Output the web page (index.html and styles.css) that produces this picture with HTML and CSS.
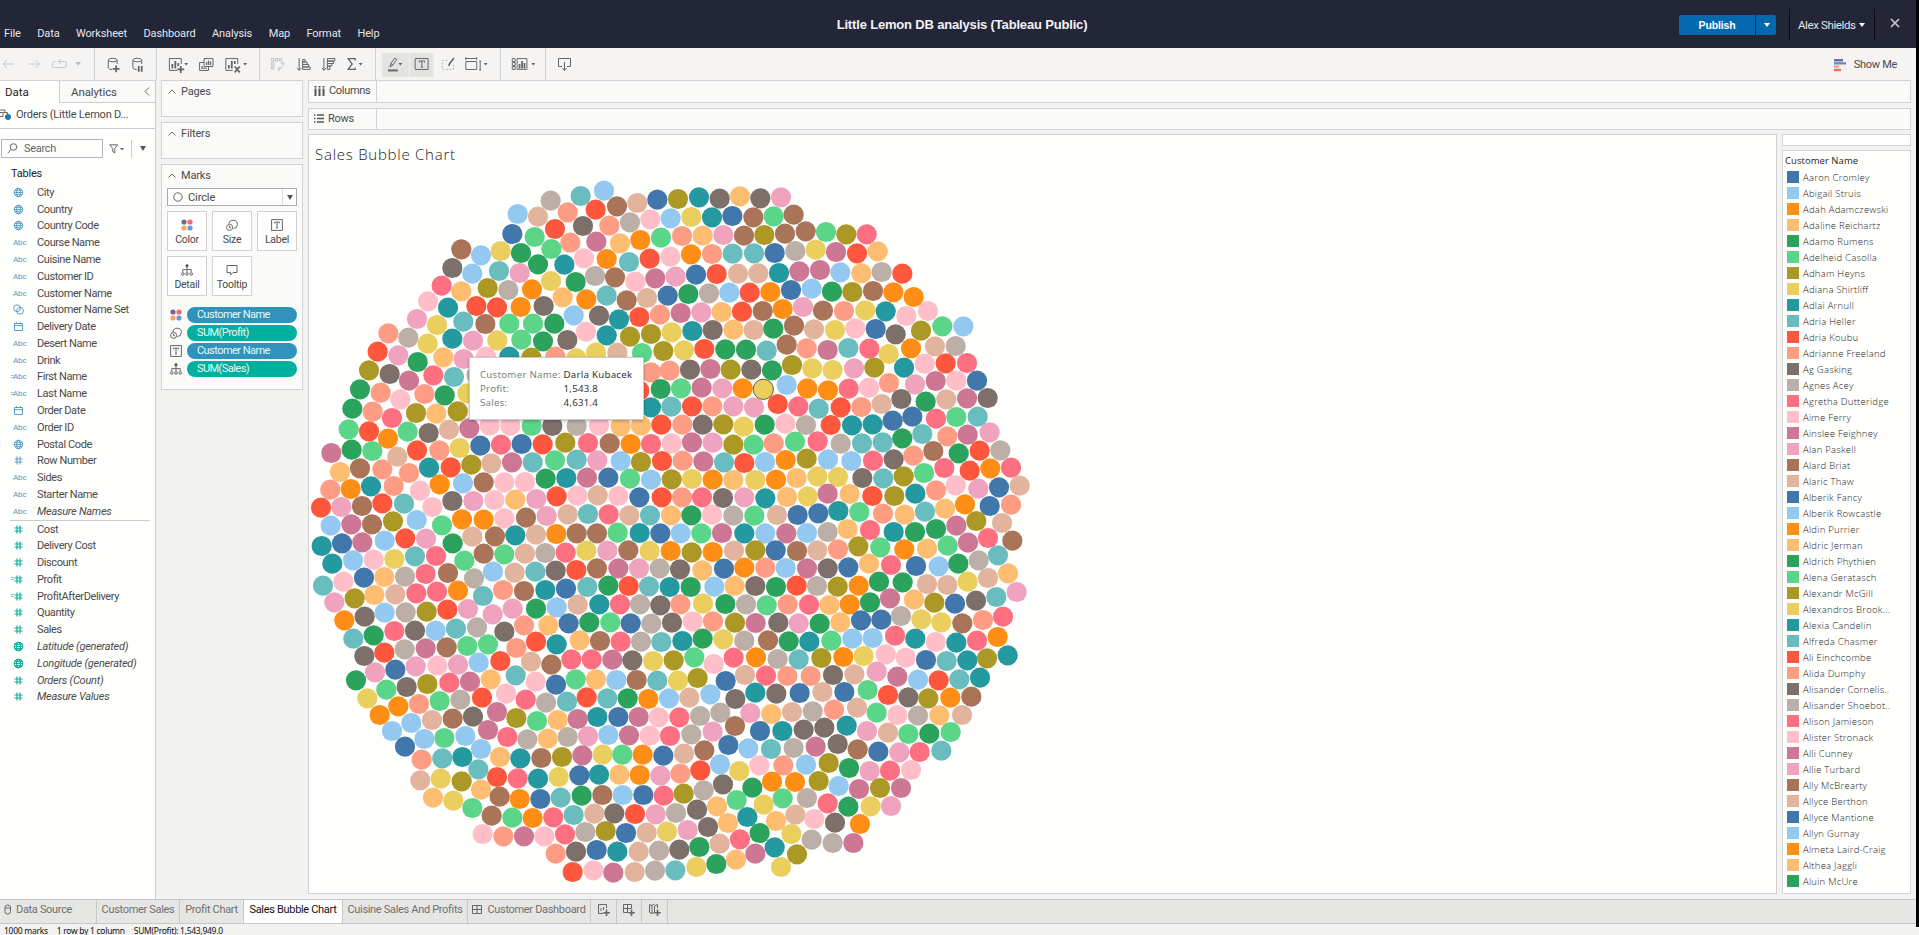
FILE: index.html
```html
<!DOCTYPE html>
<html lang="en">
<head>
<meta charset="utf-8">
<title>Little Lemon DB analysis (Tableau Public)</title>
<link rel="stylesheet" href="styles.css">
</head>
<body>
<svg class="sprite" aria-hidden="true">
  <symbol id="i-globe" viewBox="0 0 11 11"><circle cx="5.5" cy="5.5" r="4.2"/><ellipse cx="5.5" cy="5.5" rx="1.9" ry="4.2"/><path d="M1.3 5.5h8.4M2 3.3h7M2 7.7h7"/></symbol>
  <symbol id="i-num" viewBox="0 0 11 11"><path d="M4 1.5v8M7 1.5v8M1.5 4h8M1.5 7h8"/></symbol>
  <symbol id="i-date" viewBox="0 0 11 11"><path d="M1.5 2.5h8v7h-8zM1.5 4.7h8M3.5 1.2v1.3M7.5 1.2v1.3"/></symbol>
  <symbol id="i-set" viewBox="0 0 11 11"><circle cx="4" cy="4.2" r="3.4"/><circle cx="7" cy="6.8" r="3.4"/></symbol>
  <symbol id="m-color" viewBox="0 0 12 12"><g stroke="none"><circle cx="3" cy="3" r="2.6" fill="#7b6688"/><circle cx="9" cy="3" r="2.6" fill="#ec6a6a"/><circle cx="3" cy="9" r="2.6" fill="#f3a56c"/><circle cx="9" cy="9" r="2.6" fill="#6a9bd0"/></g></symbol>
  <symbol id="m-size" viewBox="0 0 12 12"><path d="M3 5a4.200 4.200 0 1 1 4.300 4.600"/><circle cx="3.600" cy="8.400" r="3"/><path d="M3.500 6.800v1.900h1.400"/></symbol>
  <symbol id="m-label" viewBox="0 0 12 12"><path d="M.6.6h10.8v10.8H.6zM3.5 4.3V3.2h5v1.1M6 3.2v5.6M5 8.8h2"/></symbol>
  <symbol id="m-detail" viewBox="0 0 12 12"><circle cx="6" cy="1.8" r="1.2" fill="#555"/><path d="M6 2v6M1.800 8V5.600h8.400V8"/><circle cx="1.800" cy="9.900" r="1.300"/><circle cx="6" cy="9.900" r="1.300"/><circle cx="10.200" cy="9.900" r="1.300"/></symbol>
  <symbol id="m-tip" viewBox="0 0 12 12"><path d="M1 1.5h10v7H7L4.5 11V8.5H1z"/></symbol>
</svg>

<div class="app">
  <header class="header">
    <nav class="menu"><span>File</span><span>Data</span><span>Worksheet</span><span>Dashboard</span><span>Analysis</span><span>Map</span><span>Format</span><span>Help</span></nav>
    <h1 class="book">Little Lemon DB analysis (Tableau Public)</h1>
    <div class="account">
      <button class="publish"><span>Publish</span><i class="caret"></i></button>
      <div class="user">Alex Shields<i class="caret"></i></div>
      <svg class="close" width="10" height="10" viewBox="0 0 10 10"><path d="M1 1l8 8M9 1l-8 8"/></svg>
    </div>
  </header>

  <div class="toolbar">
    <svg width="95" height="32" viewBox="0 0 95 32"><g stroke="#c6c6c6"><path d="M3 16h11M7 12l-4 4 4 4M29 16h11M36 12l4 4-4 4"/><path d="M56 13.500h-1.500q-1.500 0-1.500 1.500v3q0 1.500 1.500 1.500h11q1.500 0 1.500-1.500v-3q0-1.500-1.500-1.500H59M61.500 11l-2.500 2.500 2.500 2.500"/></g><path fill="#bbb" stroke="none" d="M76 14h6l-3 3.500z"/></svg>
    <svg width="62" height="32" viewBox="95 0 62 32"><ellipse cx="113" cy="12" rx="4.500" ry="1.800"/><path d="M108.500 12v8q1 1.700 4 1.700M117.500 12v4"/><path stroke-width="1.800" d="M116.500 17.500v7M113 21h7"/><ellipse cx="138" cy="12" rx="4.500" ry="1.800"/><path d="M133.500 12v8q1 1.700 4 1.700M142.500 12v4"/><path stroke-width="1.800" d="M139.500 18v6M142.500 18v6"/></svg>
    <svg width="103" height="32" viewBox="157 0 103 32"><path d="M181.500 16v-5.500h-12v12h8"/><path stroke-width="1.800" d="M172.500 16v4.500M175.500 13v7.500M178.500 15v3M181 18v7M177.500 21.500h7"/><path class="tri" d="M184.500 15h4l-2 2.500z"/><path d="M204.500 10.500h9v8h-9z M209 18.500v4h-9v-8h4.500"/><path stroke-width="1.300" d="M207 14v3M209 12.500v4.500M211 13.500v3.500M202.500 18v3M204.500 19.500V21M206.500 19.500V21"/><path d="M238.500 16v-5.500h-12v12h7"/><path stroke-width="1.800" d="M229.500 17v3.500M232.500 13v7.500M235.500 13v3M235.500 18.500l5 6M240.500 18.500l-5 6"/><path class="tri" d="M244 15h4l-2 2.500z"/></svg>
    <svg width="116" height="32" viewBox="260 0 116 32"><g stroke="#c0c0c0"><path d="M271.500 10.500h2.500v2.500h-2.500zM275.500 10.500h2.500v2.500h-2.500zM279.500 10.500h2.500v2.500h-2.500zM271.500 14.500h2.500v2.500h-2.500zM271.500 18.500h2.500v2.500h-2.500zM283 15c1 4-2 6-5 6M281 16l2-2 2 2M280 19l-2 2 2 2"/></g><path d="M299.500 10v12M297.500 20l2 2.500 2-2.500M303 11.500h2.500v2.500H303zM303 14h4.500v2.500H303zM303 16.500h6v2.500h-6zM303 19h7.500v2.500H303z"/><path d="M324.500 10v12M322.500 20l2 2.500 2-2.500M328 10.500h7.500v2.500H328zM328 13h6v2.500h-6zM328 15.500h4.500v2.500H328zM328 18h2.500v3.500H328z"/><path stroke-width="1.300" d="M356 12.500v-2h-7l4 5.500-4 5.500h7v-2"/><path class="tri" d="M359.500 15h4l-2 2.500z"/></svg>
    <svg width="125" height="32" viewBox="376 0 125 32"><path fill="#e3e3e2" stroke="none" d="M382 5h27v24h-27zM410 5h24v24h-24z"/><path stroke-width="2" d="M388 22.500h10"/><path d="M390 19l1-3.500 4-5.500 2 1.500-4 5.500zM391 15.500l2 1.500"/><path class="tri" d="M398.500 15h4l-2 2.500z"/><path d="M415.500 10.500h13v11h-13zM419.500 14.500v-1.500h5.500v1.500M422.200 13v6M421 19.200h2.500"/><path stroke="#bbb" stroke-dasharray="2 1.500" d="M448 12.500h-5v9h11v-5"/><path stroke-width="1.700" d="M454.500 10l-4.500 6-.5 2"/><path d="M466.500 10.500h11M466.500 9v3M477.500 9v3M466.500 13.500h11v8h-11zM481 13v9M480 13h2M480 22h2"/><path class="tri" d="M484.500 15h4l-2 2.500z"/></svg>
    <svg width="45" height="32" viewBox="501 0 45 32"><path d="M512.500 10.500h3v3h-3zM512.500 14.500h3v3h-3zM512.500 18.500h3v3h-3zM517.500 10.500h10v11h-10z"/><path stroke-width="1.800" d="M520 16v4.500M522.500 13v7.500M525 15v5.500"/><path class="tri" d="M532 15h4l-2 2.500z"/></svg>
    <svg class="last" width="40" height="32" viewBox="546 0 40 32"><path d="M562 18.500h-3.500v-8h12v8H567M564.500 14v8M562.500 20l2 2.500 2-2.500"/></svg>
    <div class="showme"><svg width="13" height="14" viewBox="0 0 13 14"><g stroke="none"><path fill="#7a6b9c" d="M0 1h9v2.500H0z"/><path fill="#5f8cc7" d="M0 4.200h12v2.300H0z"/><path fill="#f0a08a" d="M0 7.500h5v2.300H0z"/><path fill="#ea6d6d" d="M0 10.800h7v2.400H0z"/></g></svg>Show Me</div>
  </div>

  <main class="body">
    <aside class="data">
      <div class="dtabs"><div class="dtab on">Data</div><div class="dtab off">Analytics<svg width="6" height="9" viewBox="0 0 6 9"><path d="M5 .5l-4 4 4 4"/></svg></div></div>
      <div class="source"><svg width="12" height="13" viewBox="0 0 12 13"><path d="M0 2h5v3M0 4.500h3v4H0M3.500 4.500h4v4"/><circle cx="8" cy="9" r="3" fill="#1f77b4" stroke="none"/></svg>Orders (Little Lemon D...</div>
      <div class="find">
        <div class="search"><svg width="11" height="11" viewBox="0 0 11 11"><circle cx="6.500" cy="4" r="3.300"/><path d="M4 6.500L.8 10.200"/></svg>Search</div>
        <svg width="16" height="10" viewBox="0 0 16 10"><path d="M.7.8h8L5.800 4.500V9L3.700 7.500v-3z"/><path class="tri" d="M11 4h4l-2 2.500z"/></svg>
        <i class="bar"></i><i class="caret"></i>
      </div>
      <div class="tables">Tables</div>
      <ul class="fields" id="dims"></ul>
      <ul class="fields measures" id="meas"></ul>
    </aside>

    <section class="cards">
      <div class="card short"><div class="chead"><svg width="8" height="5" viewBox="0 0 8 5"><path d="M.5 4.500L4 1l3.500 3.500"/></svg>Pages</div></div>
      <div class="card short"><div class="chead"><svg width="8" height="5" viewBox="0 0 8 5"><path d="M.5 4.500L4 1l3.500 3.500"/></svg>Filters</div></div>
      <div class="card marks">
        <div class="chead"><svg width="8" height="5" viewBox="0 0 8 5"><path d="M.5 4.500L4 1l3.500 3.500"/></svg>Marks</div>
        <div class="select"><svg width="10" height="10" viewBox="0 0 10 10"><circle cx="5" cy="5" r="4.200"/></svg><span>Circle</span><b><i class="caret"></i></b></div>
        <div class="btns">
          <div><svg width="12" height="12"><use href="#m-color"/></svg>Color</div>
          <div><svg width="12" height="12"><use href="#m-size"/></svg>Size</div>
          <div><svg width="12" height="12"><use href="#m-label"/></svg>Label</div>
          <div><svg width="12" height="12"><use href="#m-detail"/></svg>Detail</div>
          <div><svg width="12" height="12"><use href="#m-tip"/></svg>Tooltip</div>
        </div>
        <div class="pills">
          <div><svg width="12" height="12"><use href="#m-color"/></svg><span class="blue">Customer Name</span></div>
          <div><svg width="12" height="12"><use href="#m-size"/></svg><span>SUM(Profit)</span></div>
          <div><svg width="12" height="12"><use href="#m-label"/></svg><span class="blue">Customer Name</span></div>
          <div><svg width="12" height="12"><use href="#m-detail"/></svg><span>SUM(Sales)</span></div>
        </div>
      </div>
    </section>

    <section class="work">
      <div class="shelf cols"><div><svg width="11" height="10" viewBox="0 0 11 10"><path stroke-width="2" d="M1.500 0v1.500M5.500 0v1.500M9.500 0v1.500M1.500 2.500V10M5.500 2.500V10M9.500 2.500V10"/></svg>Columns</div></div>
      <div class="shelf rows"><div><svg width="10" height="9" viewBox="0 0 10 9"><path stroke-width="1.500" d="M0 1h1.500M3 1h7M0 4.500h1.500M3 4.500h7M0 8h1.500M3 8h7"/></svg>Rows</div></div>
      <div class="stage">
        <div class="sheet">
          <h2>Sales Bubble Chart</h2>
          <svg id="chart" width="1467" height="720" viewBox="309 172 1467 720"></svg>
          <div class="tooltip"><span>Customer Name:</span><b>Darla Kubacek</b><span>Profit:</span><b>1,543.8</b><span>Sales:</span><b>4,631.4</b></div>
        </div>
        <div class="side">
          <div class="blank"></div>
          <div class="legend"><h3>Customer Name</h3><ul id="legend"></ul></div>
        </div>
      </div>
    </section>
  </main>

  <footer>
    <div class="tabs">
      <div class="t1"><svg width="8" height="11" viewBox="0 0 8 11"><rect x="1" y="1" width="5.500" height="9" rx="2.500"/><path d="M1 4h5.500"/></svg>Data Source</div>
      <div class="t2">Customer Sales</div>
      <div class="t3">Profit Chart</div>
      <div class="t4 on">Sales Bubble Chart</div>
      <div class="t5">Cuisine Sales And Profits</div>
      <div class="t6"><svg width="10" height="9" viewBox="0 0 10 9"><path d="M.5.5h9v8h-9zM5 .5v8M.5 4.500h9"/></svg>Customer Dashboard</div>
      <div class="t7"><svg width="13" height="13" viewBox="0 0 13 13"><path d="M9.500 5V1.500h-8v9H6M4 5v3M6.500 4v3"/><path stroke-width="1.600" d="M9.500 6.500V13M6.300 9.800h6.500"/></svg></div>
      <div class="t7"><svg width="13" height="13" viewBox="0 0 13 13"><path d="M9.500 5V1.500h-8v8H6M5.500 1.500v8M1.500 5.500h8"/><path stroke-width="1.600" d="M9.500 6.500V13M6.300 9.800h6.500"/></svg></div>
      <div class="t7"><svg width="13" height="13" viewBox="0 0 13 13"><path d="M9.500 5V1.500L6.500 3v7M1.500 1.500L4 2.500 6.500 1M1.500 1.500v8l2.500 1 2.500-1M4 2.500v8"/><path stroke-width="1.600" d="M9.500 6.500V13M6.300 9.800h6.500"/></svg></div>
    </div>
    <div class="status"><span>1000 marks</span><span>1 row by 1 column</span><span>SUM(Profit): 1,543,949.0</span></div>
  </footer>
</div>
<div class="edge"></div>
<script src="script.js"></script>
</body>
</html>
```
FILE: styles.css
```css
* { box-sizing: border-box; }
body { margin: 0; width: 1919px; height: 935px; overflow: hidden; display: flex; background: #f2f2f1; font-family: Roboto, "Liberation Sans", sans-serif; font-size: 11px; color: #4a4a4a; }
h1, h2, h3, ul { margin: 0; padding: 0; font-weight: 400; list-style: none; }
svg { display: block; flex: none; fill: none; stroke: #666; }
.sprite { position: absolute; width: 0; height: 0; }
.tri { fill: #666; stroke: none; }
.caret { width: 0; height: 0; border: 4px solid transparent; border-top: 5px solid #555; border-bottom: 0; flex: none; }
.app { width: 1916px; display: flex; flex-direction: column; }
.edge { width: 3px; height: 927px; background: #000; }

.header { height: 48px; background: #232637; display: grid; grid-template-columns: 600px 1fr 600px; color: #e4e4e8; }
.menu { display: flex; align-items: center; gap: 16.500px; padding: 17px 0 0 4px; font-size: 11px; letter-spacing: -.13px; }
.book { font-size: 13px; font-weight: 700; line-height: 49px; text-align: center; color: #f2f2f5; padding-left: 8px; letter-spacing: -.17px; font-family: "Liberation Sans", sans-serif; }
.account { display: flex; justify-content: flex-end; align-items: center; padding-right: 16px; }
.publish { display: flex; align-items: center; height: 20px; width: 97px; padding: 0 7px 0 0; border: 0; border-radius: 2px; background: #0369ae; color: #fff; font: 700 10.500px "Liberation Sans", sans-serif; margin-right: 13px; }
.publish span { width: 77px; height: 20px; line-height: 20px; border-right: 1px solid #232637; margin-right: 8px; flex: none; letter-spacing: -.15px; }
.publish .caret, .user .caret { border-top-color: #fff; border-width: 4px 3px 0; }
.user { height: 32px; display: flex; align-items: center; gap: 3px; border: solid #0a0b12; border-width: 0 1px; padding: 0 11px 0 8px; width: 86px; font-size: 11.500px; letter-spacing: -.38px; margin-right: 15px; white-space: nowrap; }
.close { stroke: #ccc; stroke-width: 1.600; margin-top: -3px; }

.toolbar { height: 32px; display: flex; background: #f5f4f3; }
.toolbar > svg { border-right: 1px solid #d0d0d0; }
.toolbar > svg.last { border: 0; }
.showme { display: flex; align-items: center; gap: 7px; margin-left: auto; padding-right: 19px; font-size: 11px; letter-spacing: -.3px; padding-top: 1px; }

.body { height: 819px; display: flex; }
.data { width: 156px; background: #fffffe; border-right: 1px solid #ccc; }
.dtabs { height: 23px; display: flex; border-top: 1px solid #d4d4d4; font-size: 11.500px; }
.dtab { display: flex; align-items: center; padding-bottom: 1px; }
.dtab.on { width: 59px; padding-left: 5px; color: #222; }
.dtab.off { flex: 1; border-left: 1px solid #ccc; border-bottom: 1px solid #ccc; padding: 0 5px 0 11px; justify-content: space-between; letter-spacing: -.1px; background: #fafaf9; }
.source { height: 26px; display: flex; align-items: center; gap: 4px; border-bottom: 1px solid #ccc; font-size: 11px; letter-spacing: -.22px; padding-bottom: 2px; white-space: nowrap; }
.find { height: 38px; padding: 10px 9px 9px 1px; display: flex; align-items: center; gap: 6px; }
.search { width: 103px; height: 19px; border: 1px solid #b5b5b5; display: flex; align-items: center; gap: 6px; padding: 0 0 1px 5px; font-size: 11px; letter-spacing: -.3px; color: #666; }
.find .bar { width: 1px; height: 18px; background: #ccc; }
.find .caret { margin-left: 2px; border-width: 5px 3px 0; }
.tables { height: 17px; padding-left: 11px; line-height: 14px; font-size: 11px; color: #222; letter-spacing: -.2px; }
.fields li { height: 16.790px; display: flex; align-items: center; font-size: 11px; letter-spacing: -.4px; white-space: nowrap; }
.fields .ic { width: 27px; padding-left: 13px; flex: none; margin-right: 10px; color: #4a97bd; font-size: 8px; letter-spacing: -.1px; display: flex; position: relative; }
.fields .ic svg { stroke: #4a97bd; stroke-width: .9; }
.fields .calc::before { content: "="; position: absolute; left: 10px; }
.measures { border-top: 1px solid #ccc; margin: 0 5px 0 10px; }
.measures li { margin-left: -10px; }
.measures .ic { color: #00a99d; }
.measures .ic svg { stroke: #12b09f; stroke-width: 1.200; }
.fields .em { font-style: italic; letter-spacing: -.26px; }

.cards { width: 152px; padding: 0 5px; display: flex; flex-direction: column; gap: 5px; }
.card { border: 1px solid #d4d4d4; background: #fafaf9; }
.short { height: 37px; }
.marks { height: 226px; padding: 0 5px; }
.chead { display: flex; align-items: center; gap: 5px; height: 20px; padding-left: 6px; font-size: 11px; letter-spacing: -.15px; }
.marks .chead { padding-left: 1px; }
.select { height: 18px; margin-top: 3px; border: 1px solid #aaa; background: #fff; display: flex; align-items: center; gap: 5px; padding-left: 5px; font-size: 11px; letter-spacing: -.1px; }
.select span { flex: 1; }
.select b { height: 16px; width: 14px; border-left: 1px solid #ddd; display: flex; align-items: center; justify-content: center; }
.select .caret { border-width: 5px 3px 0; }
.btns { display: grid; grid-template-columns: repeat(3, 40px); gap: 5px; margin-top: 5px; }
.btns div { height: 40px; border: 1px solid #d0d0d0; background: #fff; display: flex; flex-direction: column; align-items: center; gap: 2px; padding-top: 7px; font-size: 10.500px; line-height: 14px; letter-spacing: -.25px; }
.pills { display: grid; gap: 2.300px; margin-top: 10.500px; }
.pills div { display: flex; align-items: center; gap: 5px; padding-left: 3px; }
.pills span { flex: 1; height: 16px; line-height: 16px; border-radius: 8px; background: #00b09f; color: #e6faf6; padding-left: 10px; font-size: 11px; letter-spacing: -.55px; }
.pills .blue { background: #2f93bd; }

.work { width: 1608px; padding-right: 5px; }
.shelf { height: 23px; background: #fafaf9; border: 1px solid #d4d4d4; }
.rows { height: 22px; margin: 5px 0 4px; }
.shelf div { width: 68px; height: 100%; border-right: 1px solid #d4d4d4; display: flex; align-items: center; gap: 4px; padding: 0 0 2px 5px; font-size: 11px; letter-spacing: -.3px; }
.shelf svg { stroke: #555; }
.stage { display: flex; gap: 5px; height: 760px; }
.sheet { width: 1469px; background: #fffffe; border: 1px solid #d0d0d0; position: relative; }
.sheet h2 { height: 37px; padding: 10px 0 0 6px; font: 300 15px/19px "Open Sans", sans-serif; color: #222; letter-spacing: .75px; }
.tooltip { position: absolute; left: 160px; top: 222px; width: 175px; height: 63px; background: #fff; border: 1px solid #ccc; box-shadow: 0 1px 3px rgba(0,0,0,.3); padding: 10px 10px 0; display: grid; grid-template-columns: 83.500px 1fr; grid-auto-rows: 14px; font: 400 9.700px/14px "Noto Sans", sans-serif; color: #808080; letter-spacing: .25px; white-space: nowrap; }
.tooltip b { color: #333; font-weight: 400; }
.side { width: 129px; display: flex; flex-direction: column; gap: 4px; }
.blank { height: 12px; background: #fff; border: 1px solid #d4d4d4; }
.legend { height: 744px; background: #fffffe; border: 1px solid #d4d4d4; padding: 2px 0 0 2px; font-family: "Open Sans", sans-serif; }
.legend h3 { font-size: 9.500px; line-height: 16px; color: #222; letter-spacing: .05px; }
.legend li { height: 16px; display: flex; align-items: center; gap: 4px; padding-left: 2px; font-size: 9.500px; font-weight: 300; color: #222; white-space: nowrap; letter-spacing: .25px; }
.legend i { width: 12px; height: 12px; }

footer { border-top: 1px solid #c4c4c4; }
.tabs { height: 24px; display: flex; background: #e6e6e4; border-bottom: 1px solid #c8c8c8; font-size: 11px; letter-spacing: -.32px; color: #707070; white-space: nowrap; }
.tabs div { border-right: 1px solid #c8c8c8; display: flex; align-items: center; justify-content: center; gap: 5px; padding-bottom: 4px; flex: none; }
.tabs .on { background: #fff; color: #111; }
.t1 { width: 97px; } .tabs .t1 { justify-content: flex-start; padding-left: 4px; gap: 4px; }
.t2 { width: 83px; } .t3 { width: 64px; } .t4 { width: 99px; } .t5 { width: 125px; } .t6 { width: 123px; } .t7 { width: 25.500px; }
.status { height: 11px; display: flex; gap: 9px; padding: 1px 0 0 4px; font: 8.500px/11px "Noto Sans", sans-serif; letter-spacing: -.28px; color: #111; }
```
FILE: script.js
```js
const NS = "http://www.w3.org/2000/svg";
const COLORS = {
  a: "#4277ab", b: "#93c9f0", c: "#ff8e16", d: "#ffbd71", e: "#2ba35d",
  f: "#5bd587", g: "#ac9824", h: "#eacf5f", i: "#24999f", j: "#6abdbf",
  k: "#ff573e", l: "#ff9d84", m: "#7d6f6a", n: "#bcafa8", o: "#ff6f82",
  p: "#ffbec8", q: "#cd7795", r: "#efa3bf", s: "#aa7458", t: "#e2b49e"
};

const dims = ["g City", "g Country", "g Country Code", "a Course Name", "a Cuisine Name", "a Customer ID",
  "a Customer Name", "s Customer Name Set", "d Delivery Date", "a Desert Name", "a Drink", "A First Name",
  "A Last Name", "d Order Date", "a Order ID", "g Postal Code", "n Row Number", "a Sides", "a Starter Name",
  "a *Measure Names"];
const meas = ["n Cost", "n Delivery Cost", "n Discount", "N Profit", "N ProfitAfterDelivery", "n Quantity",
  "n Sales", "g *Latitude (generated)", "g *Longitude (generated)", "n *Orders (Count)", "n *Measure Values"];
const ICONS = { g: "i-globe", n: "i-num", d: "i-date", s: "i-set" };

function fillFields(id, list) {
  document.getElementById(id).innerHTML = list.map(f => {
    const k = f[0], em = f[2] === "*", name = f.slice(em ? 3 : 2);
    const icon = ICONS[k.toLowerCase()];
    const body = icon ? `<svg width="11" height="11"><use href="#${icon}"/></svg>` : "Abc";
    return `<li><span class="ic${k < "a" ? " calc" : ""}">${body}</span><span${em ? ' class="em"' : ""}>${name}</span></li>`;
  }).join("");
}
fillFields("dims", dims);
fillFields("meas", meas);

const people = ["Aaron Cromley", "Abigail Struis", "Adah Adamczewski", "Adaline Reichartz", "Adamo Rumens",
  "Adelheid Casolla", "Adham Heyns", "Adiana Shirtliff", "Adlai Arnull", "Adria Heller", "Adria Koubu",
  "Adrianne Freeland", "Ag Gasking", "Agnes Acey", "Agretha Dutteridge", "Aime Ferry", "Ainslee Feighney",
  "Alan Paskell", "Alard Briat", "Alaric Thaw", "Alberik Fancy", "Alberik Rowcastle", "Aldin Purrier",
  "Aldric Jerman", "Aldrich Phythien", "Alena Geratasch", "Alexandr McGill", "Alexandros Brook...",
  "Alexia Candelin", "Alfreda Chasmer", "Ali Einchcombe", "Alida Dumphy", "Alisander Cornelis..",
  "Alisander Shoebot..", "Alison Jamieson", "Alister Stronack", "Alli Cunney", "Allie Turbard",
  "Ally McBrearty", "Allyce Berthon", "Allyce Mantione", "Allyn Gurnay", "Almeta Laird-Craig",
  "Althea Jaggli", "Aluin McUre"];
document.getElementById("legend").innerHTML = people.map((p, n) =>
  `<li><i style="background:${COLORS["abcdefghijklmnopqrst"[n % 20]]}"></i>${p}</li>`).join("");

// Bubbles by quadrant: colour key + centre in thirds of a pixel from the quadrant origin.
const quadrants = [
{ x: 300, y: 170, d: `n752,92 j842,78 b912,62 b653,132 t714,140 l803,127 k887,119 s951,109 t1012,99 a1072,89
k765,177 m849,168 l928,167 n990,157 p1051,148 b1112,145
a637,192 f704,201 l811,218 q889,215 d960,220 c1021,210 f1083,203 f754,237
s484,238 b543,256 h602,243 e663,249 e714,283 i793,284 p852,265 c920,267 j987,276 k1049,266 p1111,260
m457,294 b517,311 j597,303 r659,309 h753,333 e827,336 n885,318 s945,322 p1006,335 q1066,325
o425,347 d484,364 g563,354 n625,360 c696,358 m731,408 d788,382 c859,388 j920,377 s980,391 t1041,384 a1103,377
p384,394 i444,413 k529,408 k591,412 c662,411 b821,436 m897,437 i957,448 k1018,441 l1080,434
r351,447 h411,465 j490,455 s556,462 f628,461 f699,461 e763,461 p858,485 i920,496 g990,500 g1053,492 h1115,487
l265,490 n325,503 h383,521 i457,506 r519,512 h592,511 f664,509 e729,514 m802,510
k233,545 r295,556 e353,576 d430,562 r491,567 p558,560 i628,560 g694,563 l766,560 h829,565 h888,548 t952,548 f1026,549 g1090,543
g207,601 m269,612 q327,632 o400,616 j462,621 n530,615 l1053,607 l1109,602
e180,658 l242,668 p301,688 l373,672 e434,676 h502,670 k1018,662 e1082,657
e157,716 l218,725 o276,744 g348,729 d409,731 g473,724 i1053,712 j1114,710
f146,778 k207,784 c264,806 f323,785 m386,789 t447,779 q508,775 p569,767 p631,767 f695,768 m757,768 n830,768 p897,766 d962,769 d1023,767 k1084,764
q94,849 e155,839 f217,843 t292,860 k351,841 l418,841 h479,834 a541,827 o603,824 a665,822 k728,823 g796,818 o864,819 s929,820 c992,822 o1053,822 p1115,820
d120,906 s180,895 l247,898 l327,909 i387,893 k452,892 g514,884 t574,880 q636,877 j698,877 f765,871 j830,869 r892,871 b962,873 g1023,876 k1086,873
l91,959 c152,957 i213,949 l281,948 p360,962 c419,943 b489,940 s551,937 p613,937 p675,936 e737,926 i799,924 q861,923 a925,923 f990,926 b1053,929 g1115,928
k63,1013 r124,1011 s186,1008 k247,1000 j312,1001 p397,1011 m457,993 r520,993 p583,990 d646,989 r709,987 k770,979 p832,977 t893,976 p955,978 a1018,982 k1085,982
b92,1067 q154,1063 s216,1063 g279,1054 b350,1050 f426,1066 c486,1048 c551,1049 p613,1045 s678,1043 r740,1038 t803,1033 j864,1032 o926,1033 t988,1036 j1050,1036 d1113,1036` },
{ x: 670, y: 170, d: `g24,87 i87,82 m149,86 d210,79 m271,85 r333,82
h64,141 i126,142 a187,138 s250,142 f311,139 s371,134
l36,198 d98,197 r160,195 s222,197 g283,195 s345,191 s407,184 f468,186 g529,193 o590,193
c63,253 l126,252 j188,251 j252,250 a314,249 n376,243 h437,239 q498,246 k561,250 d623,244
r17,320 a78,314 k140,312 t204,311 t265,310 i327,309 q388,304 q450,300 b511,307 d574,310 n635,306 k697,311
e55,372 n117,370 b178,368 k239,368 c301,366 a363,360 b425,356 e486,365 g547,366 s609,363 c670,367 c731,381
q32,429 r94,427 d155,426 k216,425 s278,423 c338,417 r399,411 s459,422 l522,423 h586,421 i647,424 p709,438 p774,423
i67,483 m128,480 d190,479 t251,480 e310,476 s372,467 t432,478 h495,480 p556,475 a617,477 m677,493 g753,482 f817,469 b880,469
h42,541 k103,537 e166,538 e228,539 j290,542 s350,524 l410,535 q473,540 j535,534 o598,536 h656,552 c723,535 t795,529 n857,528
m60,599 q121,597 g182,599 m244,599 e306,601 g366,585 h427,595 h488,600 r552,595 g613,593 i702,593 p764,581 k827,580 o891,579
f33,655 q95,653 r157,655 c218,655 b350,645 c412,655 c474,661 o536,656 p597,653 l657,639 r735,643 q797,633 p859,632 a921,632
k66,709 l127,709 r190,709 r252,712 k323,702 o385,709 j446,716 k512,712 l574,711 t635,702 m694,687 e767,695 t829,688 q891,685 m953,684
l37,764 m98,764 g160,763 h221,770 e284,764 p346,761 n408,765 k482,765 i546,766 i608,763 a668,752 a727,740 o798,746 f859,741 j923,740
q66,817 r128,818 g190,824 f251,824 l311,820 f375,815 o443,814 n512,821 j576,820 j638,817 e697,805 j757,792 l832,799 q893,794 r959,787
l38,872 q100,874 j162,877 k223,879 b285,876 c347,870 g410,866 b474,868 b544,873 o609,872 m671,868 l730,857 s790,843 e866,850 k929,842 n991,841
h66,927 c128,929 d190,930 h256,930 c318,929 d380,924 h442,919 h504,921 m577,924 j640,925 g701,919 f762,909 o823,894 k899,902 c961,895 o1023,893
l36,982 o96,982 m159,984 r223,982 i286,985 d351,981 h413,979 q473,971 d539,972 k607,978 g673,978 i736,971 l798,961 p857,946 r925,956 a987,952 t1049,947
e64,1036 p126,1034 n190,1037 f253,1037 t321,1035 a383,1035 a445,1030 i505,1023 f568,1026 l639,1031 d704,1034 j765,1025 d825,1016 c885,1003 a959,1008 l1023,1004
g919,1053 t996,1059 q859,1067
b32,1090 f94,1090 q156,1089 i223,1090 b286,1090 q349,1090 b411,1089 n473,1086 d533,1077 o600,1080 i671,1086 e735,1086 e798,1077 H280,658` },
{ x: 300, y: 530, d: `i65,48 a126,40 q187,37 b254,32 k316,25 r378,26 e458,40 t517,20 s585,19 i646,16 t708,14 c769,12 s830,10 s891,10 f953,8 i1019,9 a1081,10
i97,101 b159,91 p221,89 h283,87 j345,79 o408,78 f493,92 s551,71 f613,73 t675,71 n736,69 o797,68 h859,62 r922,62 s985,61 h1049,63 c1112,63
j69,167 p130,155 a192,143 d253,141 n315,140 o377,132 s444,129 n522,145 b579,125 t644,128 j706,125 m767,122 k829,120 s891,115 q955,115 r1017,115 n1079,115
r103,217 g164,205 d223,195 t286,193 o349,190 o411,185 c474,182 j549,198 l609,180 s672,183 i736,180 a798,176 j862,171 e925,167 k986,168 j1047,169 i1109,171
c133,271 m194,260 b254,248 n317,247 g380,245 k442,239 r504,237 r578,253 r638,236 e708,236 b770,232 t833,224 i898,223 o960,223 n1020,223 m1081,226
j160,326 e221,316 o283,303 m345,302 b407,302 j468,296 n531,292 m613,305 l672,286 d745,286 a806,280 e868,277 f931,277 a992,280 n1054,281 m1116,278
m193,378 k253,368 n314,358 q377,355 s440,352 f502,348 f564,343 l649,354 k708,335 i770,343 d839,331 s900,333 o962,335 n1023,335 j1084,336
e168,451 r225,427 a286,419 r347,409 p412,407 r474,404 b536,398 k601,393 t693,395 s754,404 o814,388 o875,388 q937,389 m997,391 h1059,393 g1121,391
f259,479 m320,471 g382,462 o448,458 q510,455 d572,448 j647,436 p707,455 a768,464 f827,448 d888,448 b949,450 s1010,450 j1072,452
h202,505 c295,529 l357,522 f419,513 n481,509 k546,503 p618,491 o677,509 n738,518 j801,515 k860,502 j922,505 e983,505 c1045,507 b1107,505
c239,555 b334,579 t396,570 s458,566 m519,560 q591,546 g649,564 f711,573 d773,570 q833,567 i892,561 a955,561 q1016,561 p1076,562
b276,603 b373,627 f433,624 b496,618 q564,600 o622,621 n682,628 d743,626 n803,621 r864,619 b925,615 q987,616 p1049,617 o1110,618
a315,650 l365,689 j427,685 i487,681 b543,657 d600,681 i661,685 s724,684 g786,681 q847,676 h908,674 f967,674 c1028,674 a1090,677
t361,751 h422,746 g485,754 j535,718 k591,741 o653,745 i714,746 h776,741 a838,736 i897,734 d958,734 c1019,735 r1081,737
d399,803 h460,812 d543,779 s599,800 c659,807 a721,807 j782,803 e845,797 s907,795 b968,795 a1030,795 o1091,797
f517,834 s575,857 f637,863 c698,864 o760,862 j821,855 t883,851 m943,850 k1005,852 r1067,853
p548,912 l610,919 q672,919 p733,919 o795,913 n856,906 g917,903 a978,909 t1040,908 h1101,905
l767,971 m828,965 a890,960 i952,965 t1016,965 n1077,962
k818,1026 p880,1021 q940,1028 t1004,1026 n1065,1022` },
{ x: 670, y: 530, d: `q894,38 o954,24 s1027,32
g65,67 c128,66 t192,62 g256,61 a317,61 s381,63 t442,61 l504,58 g565,49 f631,52 c703,58 d771,56 f833,47 j984,76
m30,118 d97,121 a162,116 c223,113 l286,113 b347,114 q411,115 m473,115 a535,112 d597,101 o663,105 a738,108 b806,109 e865,101 n926,91 d1014,130
e62,171 b133,170 d194,168 m256,168 e318,171 k380,167 n441,168 g503,170 c566,167 e627,155 e698,157 t771,162 t832,165 h893,155 t954,144 r1040,186
l31,223 h99,221 e166,222 n228,223 f290,226 l353,223 o417,224 d478,225 c539,223 e600,217 q660,205 d732,209 g793,218 a855,221 m918,212 j979,201
p68,274 l129,274 g195,278 q257,279 m325,278 r386,280 e449,281 d511,277 a573,271 a634,269 n693,258 h754,268 h814,277 s877,280 l939,270 o999,260
i37,333 e98,326 h160,328 n223,332 s294,331 e356,334 i418,335 f484,332 b547,326 b608,324 o675,317 i736,326 p797,336 i859,338 o921,332 c983,321
f73,382 p131,402 o191,383 c258,382 n323,387 j386,388 g454,384 c520,381 h581,378 p647,373 p707,383 a768,390 j830,393 i892,391 g951,385 i1013,376
h24,452 g83,444 a167,453 t225,435 o288,437 l352,438 l422,438 m489,435 t553,433 r620,425 q682,440 b744,449 k806,451 j868,448 i930,443
t58,503 b121,493 m196,507 i256,488 m319,491 a389,489 t457,486 a523,486 f593,480 k654,495 m715,502 g775,505 c841,503 s904,500
o28,562 n90,558 n151,548 r241,549 d304,552 t366,546 n428,544 l492,539 t561,533 f620,548 p682,555 n744,557 d808,556 t876,555
n64,613 r128,605 s195,588 a270,603 i337,603 m401,599 m463,593 i530,587 r591,603 t654,608 f715,612 e778,611 f842,606
t42,671 s103,661 a175,645 b235,655 j303,657 n371,654 q437,650 m503,642 s563,658 a625,665 r688,667 o749,666 j814,662
l31,731 k91,721 b150,703 h208,723 p268,706 l340,706 b408,704 g476,699 e537,714 r599,723 o660,722 p723,720
g41,791 n101,781 m159,763 e247,773 c306,755 c375,756 g446,753 b506,768 q567,777 g630,774 q693,774
n18,849 m81,839 d141,829 f200,810 h281,824 f338,805 n411,804 o473,820 e535,830 h602,829 r663,828
r53,900 m114,891 d174,879 i232,861 d318,873 t376,854 p433,867 m495,878 c570,882
m28,959 e88,951 t149,941 o210,928 e269,909 h364,912 n425,929 n488,939 q550,939
j16,1021 h79,1011 e139,1002 d198,989 q256,971 i314,952 g381,973 h333,1011` }
];

const chart = document.getElementById("chart");
for (const q of quadrants) {
  for (const item of q.d.split(/\s+/)) {
    const [cx, cy] = item.slice(1).split(",").map(Number);
    const c = document.createElementNS(NS, "circle");
    c.setAttribute("cx", (q.x + cx / 3).toFixed(2));
    c.setAttribute("cy", (q.y + cy / 3).toFixed(2));
    c.setAttribute("r", 10.1);
    c.setAttribute("fill", COLORS[item[0].toLowerCase()]);
    c.setAttribute("stroke", item[0] === "H" ? "#5f5838" : "none");
    chart.appendChild(c);
  }
}
```
